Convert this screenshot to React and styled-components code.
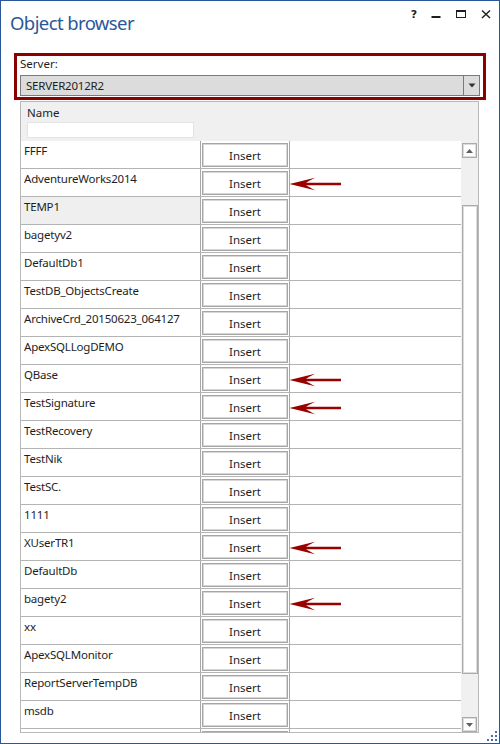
import React from "react";
import styled, { createGlobalStyle } from "styled-components";

const Global = createGlobalStyle`
  html, body { margin: 0; padding: 0; background: #fff; }
  body { font-family: "Noto Sans", "Open Sans", sans-serif; }
  * { box-sizing: border-box; }
`;

const Window = styled.div`
  position: relative;
  width: 500px;
  height: 744px;
  border: 1px solid #2b579a;
  background: #fff;
  display: flex;
  flex-direction: column;
  overflow: hidden;
`;

const TitleBar = styled.div`
  height: 52px;
  display: flex;
  justify-content: space-between;
  align-items: flex-start;
  flex-shrink: 0;
`;

const Title = styled.div`
  margin: 9px 0 0 9px;
  font-family: "Noto Sans", sans-serif;
  font-size: 18.5px;
  line-height: 26px;
  color: #2b579a;
  letter-spacing: -0.6px;
`;

const Caption = styled.div`
  display: flex;
  align-items: flex-start;
  margin-top: 7px;
  margin-right: 0px;
`;

const CaptionBtn = styled.div`
  width: ${(p) => p.$w}px;
  height: 12px;
  display: flex;
  align-items: center;
  justify-content: center;
  font-family: "DejaVu Sans", sans-serif;
  font-weight: bold;
  font-size: 11px;
  color: #1e1e1e;
`;

const Content = styled.div`
  flex: 1;
  display: flex;
  flex-direction: column;
  padding: 0 13px;
`;

const ServerBox = styled.div`
  border: 3px solid #8b0000;
  padding: 0 3px 1px 3px;
  display: flex;
  flex-direction: column;
`;

const Label = styled.div`
  font-size: 11.5px;
  line-height: 16px;
  color: #1e1e1e;
  margin-bottom: 3px;
`;

const Combo = styled.div`
  height: 21px;
  background: #dcdcdc;
  border: 1px solid #7a7a7a;
  display: flex;
  align-items: stretch;
`;

const ComboText = styled.div`
  flex: 1;
  padding-left: 5px;
  font-size: 11.5px;
  line-height: 19px;
  color: #1e1e1e;
  letter-spacing: -0.2px;
`;

const ComboButton = styled.div`
  width: 16px;
  border-left: 1px solid #7a7a7a;
  display: flex;
  align-items: center;
  justify-content: center;
`;

const Panel = styled.div`
  margin: 1px 0 0 6px;
  width: 459px;
  height: 632px;
  border: 1px solid #b8b8b8;
  display: flex;
  flex-direction: column;
  background: #f0f0f0;
`;

const Header = styled.div`
  height: 39px;
  padding: 3px 0 3px 6px;
  display: flex;
  flex-direction: column;
  gap: 1px;
  flex-shrink: 0;
`;

const HeaderLabel = styled.div`
  font-size: 11.5px;
  line-height: 16px;
  color: #1e1e1e;
`;

const Filter = styled.div`
  width: 167px;
  height: 16px;
  background: #fff;
  border: 1px solid #e3e3e3;
`;

const Body = styled.div`
  flex: 1;
  display: flex;
  min-height: 0;
`;

const Rows = styled.div`
  flex: 1;
  overflow: hidden;
  background: #fff;
`;

const Row = styled.div`
  height: 28px;
  display: flex;
  border-bottom: 1px solid #b4b4b4;
`;

const NameCell = styled.div`
  width: 180px;
  border-right: 1px solid #a8a8a8;
  padding: 2px 0 0 3px;
  font-size: 11.5px;
  line-height: 16px;
  letter-spacing: -0.2px;
  color: #1e1e1e;
  background: ${(p) => (p.$selected ? "#efefef" : "#fff")};
  white-space: nowrap;
  overflow: hidden;
`;

const ButtonCell = styled.div`
  width: 89px;
  border-right: 1px solid #a8a8a8;
  padding: 2px 1px 0 1px;
`;

const InsertButton = styled.div`
  width: 86px;
  height: 24px;
  border: 1px solid #a6a6a6;
  box-shadow: inset 0 0 0 1px #d6d6d6;
  background: #fff;
  display: flex;
  align-items: center;
  justify-content: center;
  font-size: 11.5px;
  color: #1e1e1e;
`;

const EmptyCell = styled.div`
  flex: 1;
  position: relative;
`;

const Arrow = styled.svg`
  position: absolute;
  left: -1px;
  top: 8px;
`;

const ScrollBar = styled.div`
  width: 17px;
  background: #f0f0f0;
  display: flex;
  flex-direction: column;
  padding: 2px 0 0 1px;
`;

const ScrollBtn = styled.div`
  width: 15px;
  height: 15px;
  border: 1px solid #ababab;
  box-shadow: inset 0 0 0 1px #dcdcdc;
  background: #fff;
  display: flex;
  align-items: center;
  justify-content: center;
  flex-shrink: 0;
`;

const Gap = styled.div`
  height: ${(p) => p.$h}px;
  flex-shrink: 0;
`;

const Thumb = styled.div`
  width: 16px;
  height: 469px;
  border: 1px solid #ababab;
  box-shadow: inset 0 0 0 1px #dcdcdc;
  background: #fff;
  flex-shrink: 0;
`;

const Grip = styled.svg`
  position: absolute;
  right: 1px;
  bottom: 0px;
`;

const rows = [
  ["FFFF"],
  ["AdventureWorks2014", true],
  ["TEMP1", false, true],
  ["bagetyv2"],
  ["DefaultDb1"],
  ["TestDB_ObjectsCreate"],
  ["ArchiveCrd_20150623_064127"],
  ["ApexSQLLogDEMO"],
  ["QBase", true],
  ["TestSignature", true],
  ["TestRecovery"],
  ["TestNik"],
  ["TestSC."],
  ["1111"],
  ["XUserTR1", true],
  ["DefaultDb"],
  ["bagety2", true],
  ["xx"],
  ["ApexSQLMonitor"],
  ["ReportServerTempDB"],
  ["msdb"],
  ["", false, false, true],
];

const RedArrow = () => (
  <Arrow width="53" height="14" viewBox="0 0 53 14">
    <path
      d="M0.5 7 L26 0.8 Q19 4.5 17 5.7 L52 5.7 L52 8.3 L17 8.3 Q19 9.5 26 13.2 Z"
      fill="#990000"
    />
  </Arrow>
);

export default function App() {
  return (
    <>
      <Global />
      <Window>
        <TitleBar>
          <Title>Object browser</Title>
          <Caption>
            <CaptionBtn $w={18}>?</CaptionBtn>
            <CaptionBtn $w={26}>
              <svg width="10" height="12" viewBox="0 0 10 12">
                <rect x="0.5" y="8" width="9" height="2" fill="#1e1e1e" />
              </svg>
            </CaptionBtn>
            <CaptionBtn $w={24}>
              <svg width="10" height="12" viewBox="0 0 10 12">
                <rect x="0.5" y="2.5" width="9" height="7" fill="none" stroke="#1e1e1e" strokeWidth="1" />
                <rect x="0" y="2" width="10" height="2" fill="#1e1e1e" />
              </svg>
            </CaptionBtn>
            <CaptionBtn $w={26}>
              <svg width="10" height="12" viewBox="0 0 10 12">
                <path d="M1 2.5 L9 10 M9 2.5 L1 10" stroke="#1e1e1e" strokeWidth="1.4" />
              </svg>
            </CaptionBtn>
          </Caption>
        </TitleBar>
        <Content>
          <ServerBox>
            <Label>Server:</Label>
            <Combo>
              <ComboText>SERVER2012R2</ComboText>
              <ComboButton>
                <svg width="8" height="5" viewBox="0 0 8 5">
                  <path d="M0.5 0.5 L7.5 0.5 L4 4.5 Z" fill="#333" />
                </svg>
              </ComboButton>
            </Combo>
          </ServerBox>
          <Panel>
            <Header>
              <HeaderLabel>Name</HeaderLabel>
              <Filter />
            </Header>
            <Body>
              <Rows>
                {rows.map(([name, arrow, selected, partial], i) => (
                  <Row key={i}>
                    <NameCell $selected={selected}>{name}</NameCell>
                    <ButtonCell>
                      <InsertButton>{partial ? "" : "Insert"}</InsertButton>
                    </ButtonCell>
                    <EmptyCell>{arrow && <RedArrow />}</EmptyCell>
                  </Row>
                ))}
              </Rows>
              <ScrollBar>
                <ScrollBtn>
                  <svg width="7" height="4" viewBox="0 0 7 4">
                    <path d="M0 4 L7 4 L3.5 0 Z" fill="#606060" />
                  </svg>
                </ScrollBtn>
                <Gap $h={47} />
                <Thumb />
                <Gap $h={43} />
                <ScrollBtn>
                  <svg width="7" height="4" viewBox="0 0 7 4">
                    <path d="M0 0 L7 0 L3.5 4 Z" fill="#606060" />
                  </svg>
                </ScrollBtn>
              </ScrollBar>
            </Body>
          </Panel>
        </Content>
        <Grip width="12" height="12" viewBox="0 0 12 12">
          <g fill="#4a6fa8">
            <rect x="9" y="0" width="2" height="2" />
            <rect x="5" y="4" width="2" height="2" />
            <rect x="9" y="4" width="2" height="2" />
            <rect x="1" y="8" width="2" height="2" />
            <rect x="5" y="8" width="2" height="2" />
            <rect x="9" y="8" width="2" height="2" />
          </g>
        </Grip>
      </Window>
    </>
  );
}
